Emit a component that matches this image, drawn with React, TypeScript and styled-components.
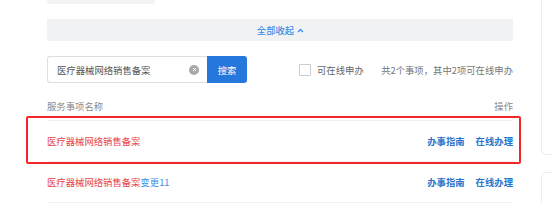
import React from "react"
import styled, { createGlobalStyle } from "styled-components"

const GlobalStyle = createGlobalStyle`
  html, body {
    margin: 0;
    padding: 0;
    background: #fff;
    overflow: hidden;
  }
  body {
    font-family: "Noto Sans CJK SC", "Noto Sans", sans-serif;
    font-size: 9.35px;
    color: #666;
  }
`

const Page = styled.div`
  display: flex;
  height: 203px;
  padding-left: 47px;
`

const Main = styled.div`
  display: flex;
  flex-direction: column;
  width: 466px;
  flex-shrink: 0;
`

const TopTab = styled.div`
  width: 108px;
  height: 4px;
  background: #f2f3f5;
  border-radius: 0 0 3px 3px;
`

const CollapseBar = styled.div`
  margin-top: 15px;
  height: 22px;
  background: #f1f2f4;
  display: flex;
  align-items: center;
  justify-content: center;
  gap: 3px;
  color: #3a8ee6;
  font-weight: 500;
  padding-left: 1px;
`

const SearchRow = styled.div`
  margin-top: 15px;
  display: flex;
  align-items: center;
  height: 27px;
`

const InputBox = styled.div`
  width: 160px;
  height: 27px;
  box-sizing: border-box;
  border: 1px solid #dcdfe6;
  border-right: none;
  border-radius: 3px 0 0 3px;
  display: flex;
  align-items: center;
  padding: 0 9px 0 9px;
  color: #555;
`

const InputText = styled.span`
  flex: 1;
`

const ClearIcon = styled.span`
  width: 10px;
  height: 10px;
  border-radius: 50%;
  background: #a8a8a8;
  display: flex;
  align-items: center;
  justify-content: center;
  margin-right: -1px;
`

const SearchButton = styled.button`
  width: 40px;
  height: 27px;
  border: none;
  border-radius: 0 3px 3px 0;
  background: #2677db;
  color: #fff;
  font-family: inherit;
  font-size: 9.35px;
  padding: 0;
`

const FilterCheck = styled.label`
  margin-left: 52px;
  display: flex;
  align-items: center;
  gap: 6px;
  color: #666;
`

const Box = styled.span`
  width: 10px;
  height: 10px;
  border: 1px solid #ccc;
  border-radius: 1px;
  background: #fff;
`

const Summary = styled.span`
  margin-left: auto;
  color: #777;
  white-space: nowrap;
`

const HeaderRow = styled.div`
  margin-top: 9px;
  height: 28px;
  display: flex;
  align-items: center;
  justify-content: space-between;
  border-bottom: 1px solid #f0f0f0;
  color: #8a8a8a;
`

const Row = styled.div<{ $highlight?: boolean }>`
  position: relative;
  height: 40px;
  display: flex;
  align-items: center;
  justify-content: space-between;
  border-bottom: 1px solid #f0f0f0;

  ${(p) =>
    p.$highlight &&
    `
    &::after {
      content: "";
      position: absolute;
      top: -5px;
      bottom: -3px;
      left: -21px;
      right: -8px;
      border: 2px solid #f5262b;
      border-radius: 2px;
      pointer-events: none;
    }
  `}
`

const ItemName = styled.span`
  color: #e8414b;
`

const Suffix = styled.span`
  color: #3a8ee6;
`

const Actions = styled.div`
  display: flex;
  gap: 11px;
`

const ActionLink = styled.a`
  color: #2a72c9;
  font-weight: 700;
  text-decoration: none;
`

const Side = styled.div`
  margin-left: 28px;
  flex: 1;
  display: flex;
  flex-direction: column;
  gap: 17px;
  overflow: hidden;
`

const SideCard = styled.div<{ $first?: boolean }>`
  box-sizing: border-box;
  flex-shrink: 0;
  height: ${(p) => (p.$first ? "155px" : "31px")};
  border: 1px solid #ececec;
  border-right: none;
  ${(p) => (p.$first ? "border-top: none;" : "border-bottom: none;")}
  border-radius: ${(p) => (p.$first ? "0 0 0 5px" : "5px 0 0 0")};
`

export default function App() {
  return (
    <>
      <GlobalStyle />
      <Page>
        <Main>
          <TopTab />
          <CollapseBar>
            全部收起
            <svg width="7" height="5" viewBox="0 0 7 5">
              <polyline points="1,4 3.5,1.5 6,4" fill="none" stroke="#3a8ee6" strokeWidth="1.4" />
            </svg>
          </CollapseBar>
          <SearchRow>
            <InputBox>
              <InputText>医疗器械网络销售备案</InputText>
              <ClearIcon>
                <svg width="5" height="5" viewBox="0 0 5 5">
                  <path d="M1 1 L4 4 M4 1 L1 4" stroke="#fff" strokeWidth="1" />
                </svg>
              </ClearIcon>
            </InputBox>
            <SearchButton>搜索</SearchButton>
            <FilterCheck>
              <Box />
              可在线申办
            </FilterCheck>
            <Summary>共2个事项，其中2项可在线申办</Summary>
          </SearchRow>
          <HeaderRow>
            <span>服务事项名称</span>
            <span>操作</span>
          </HeaderRow>
          <Row $highlight>
            <ItemName>医疗器械网络销售备案</ItemName>
            <Actions>
              <ActionLink>办事指南</ActionLink>
              <ActionLink>在线办理</ActionLink>
            </Actions>
          </Row>
          <Row>
            <ItemName>
              医疗器械网络销售备案<Suffix>变更11</Suffix>
            </ItemName>
            <Actions>
              <ActionLink>办事指南</ActionLink>
              <ActionLink>在线办理</ActionLink>
            </Actions>
          </Row>
        </Main>
        <Side>
          <SideCard $first />
          <SideCard />
        </Side>
      </Page>
    </>
  )
}
